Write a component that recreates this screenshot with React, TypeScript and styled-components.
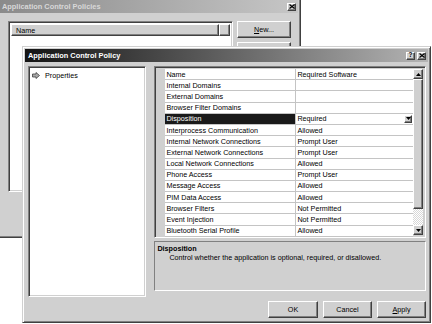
import React from 'react';
import styled, { createGlobalStyle, css } from 'styled-components';

const GlobalStyle = createGlobalStyle`
  html, body {
    margin: 0;
    padding: 0;
    background: #ffffff;
  }
  body {
    font-family: "Liberation Sans", Arial, sans-serif;
    font-size: 7.2px;
    color: #000;
  }
`;

const face = '#d0d0d0';

const raisedWindow = css`
  border: 1px solid;
  border-color: ${face} #404040 #404040 ${face};
  box-shadow: inset 1px 1px #ffffff, inset -1px -1px #808080;
`;

const raisedButton = css`
  border: 1px solid;
  border-color: #ffffff #404040 #404040 #ffffff;
  box-shadow: inset -1px -1px #808080;
`;

const sunken = css`
  border: 1px solid;
  border-color: #808080 #ffffff #ffffff #808080;
  box-shadow: inset 1px 1px #404040, inset -1px -1px ${face};
`;

const Desktop = styled.div`
  position: relative;
  width: 432px;
  height: 324px;
  overflow: hidden;
  background: #ffffff;
`;

const Window = styled.div<{ $left: number; $top: number; $width: number; $height: number }>`
  position: absolute;
  left: ${({ $left }) => $left}px;
  top: ${({ $top }) => $top}px;
  width: ${({ $width }) => $width}px;
  height: ${({ $height }) => $height}px;
  box-sizing: border-box;
  background: ${face};
  padding: 2px;
  display: flex;
  flex-direction: column;
  ${raisedWindow};
`;

const TitleBar = styled.div<{ $active?: boolean }>`
  height: 13px;
  flex: none;
  display: flex;
  align-items: center;
  gap: 2px;
  padding: 0 2px 0 3px;
  background: ${({ $active }) =>
    $active
      ? 'linear-gradient(90deg, #141414 0%, #5a5a5a 45%, #b4b4b4 100%)'
      : 'linear-gradient(90deg, #8a8a8a 0%, #c6c6c6 100%)'};
`;

const TitleText = styled.span<{ $active?: boolean }>`
  flex: 1;
  font-weight: bold;
  font-size: 7.4px;
  color: ${({ $active }) => ($active ? '#ffffff' : '#d8d8d8')};
  white-space: nowrap;
`;

const CaptionButton = styled.div`
  width: 9px;
  height: 8px;
  box-sizing: border-box;
  background: ${face};
  display: flex;
  align-items: center;
  justify-content: center;
  font-weight: bold;
  font-size: 6.5px;
  line-height: 1;
  ${raisedButton};
`;

/* background window */

const BackBody = styled.div`
  flex: 1;
  display: flex;
  gap: 4px;
  padding: 8px 0 0 9px;
`;

const ListView = styled.div`
  width: 225px;
  height: 171px;
  box-sizing: border-box;
  background: #ffffff;
  padding: 2px;
  display: flex;
  flex-direction: column;
  ${sunken};
`;

const ListHeader = styled.div`
  display: flex;
  height: 12px;
`;

const HeaderCell = styled.div<{ $width?: number }>`
  ${({ $width }) => ($width ? `width: ${$width}px;` : 'flex: 1;')}
  box-sizing: border-box;
  background: ${face};
  padding: 0 4px;
  display: flex;
  align-items: center;
  ${raisedButton};
`;

const SideButtons = styled.div`
  display: flex;
  flex-direction: column;
  gap: 4px;
`;

const PushButton = styled.div<{ $width: number }>`
  width: ${({ $width }) => $width}px;
  height: 17px;
  box-sizing: border-box;
  background: ${face};
  display: flex;
  align-items: center;
  justify-content: center;
  ${raisedButton};

  u {
    text-decoration: underline;
  }
`;

/* foreground dialog */

const DialogBody = styled.div`
  flex: 1;
  display: flex;
  flex-direction: column;
  padding: 4px 2px 0 3px;
`;

const MainRow = styled.div`
  display: flex;
  gap: 8px;
`;

const TreePanel = styled.div`
  width: 119px;
  height: 231px;
  box-sizing: border-box;
  background: #ffffff;
  padding: 4px 3px;
  ${sunken};
`;

const TreeItem = styled.div`
  display: flex;
  align-items: center;
  gap: 5px;
`;

const RightColumn = styled.div`
  width: 273px;
  display: flex;
  flex-direction: column;
  gap: 3px;
`;

const PropertyGrid = styled.div`
  height: 172px;
  box-sizing: border-box;
  padding: 2px;
  display: flex;
  background: ${face};
  ${sunken};
`;

const Rows = styled.div`
  flex: 1;
  display: flex;
  flex-direction: column;
  background: ${face};
`;

const Row = styled.div`
  height: 11.2px;
  flex: none;
  display: flex;
`;

const Gutter = styled.div`
  width: 8px;
  flex: none;
`;

const NameCell = styled.div<{ $selected?: boolean }>`
  width: 131px;
  flex: none;
  box-sizing: border-box;
  padding-left: 1px;
  display: flex;
  align-items: center;
  white-space: nowrap;
  overflow: hidden;
  border-right: 1px solid #c4c4c4;
  border-bottom: 1px solid #c4c4c4;
  background: ${({ $selected }) => ($selected ? '#1a1a1a' : '#ffffff')};
  color: ${({ $selected }) => ($selected ? '#ffffff' : '#000000')};
`;

const ValueCell = styled.div`
  flex: 1;
  box-sizing: border-box;
  padding-left: 1px;
  padding-right: 1px;
  display: flex;
  align-items: center;
  white-space: nowrap;
  background: #ffffff;
  border-bottom: 1px solid #c4c4c4;
`;

const ValueText = styled.span`
  flex: 1;
`;

const DropButton = styled.div`
  width: 8px;
  height: 8px;
  box-sizing: border-box;
  background: ${face};
  display: flex;
  align-items: center;
  justify-content: center;
  ${raisedButton};
`;

const ScrollBar = styled.div`
  width: 10px;
  flex: none;
  display: flex;
  flex-direction: column;
  background: #ececec;
`;

const ScrollArrow = styled.div`
  height: 10px;
  flex: none;
  box-sizing: border-box;
  background: ${face};
  display: flex;
  align-items: center;
  justify-content: center;
  ${raisedButton};
`;

const ScrollThumb = styled.div`
  height: 130px;
  flex: none;
  box-sizing: border-box;
  background: ${face};
  ${raisedButton};
`;

const ScrollTrack = styled.div`
  flex: 1;
  background: repeating-conic-gradient(#ffffff 0 25%, #d8d8d8 0 50%) 0 0 / 2px 2px;
`;

const DescPanel = styled.div`
  height: 50px;
  box-sizing: border-box;
  padding: 3px 2px;
  border: 1px solid;
  border-color: #808080 #ffffff #ffffff #808080;
`;

const DescTitle = styled.div`
  font-weight: bold;
  line-height: 8px;
`;

const DescText = styled.div`
  margin-left: 12px;
  line-height: 9px;
`;

const ButtonRow = styled.div`
  margin-top: 4px;
  display: flex;
  justify-content: flex-end;
  gap: 5px;
`;

const rows: [string, string][] = [
  ['Name', 'Required Software'],
  ['Internal Domains', ''],
  ['External Domains', ''],
  ['Browser Filter Domains', ''],
  ['Disposition', 'Required'],
  ['Interprocess Communication', 'Allowed'],
  ['Internal Network Connections', 'Prompt User'],
  ['External Network Connections', 'Prompt User'],
  ['Local Network Connections', 'Allowed'],
  ['Phone Access', 'Prompt User'],
  ['Message Access', 'Allowed'],
  ['PIM Data Access', 'Allowed'],
  ['Browser Filters', 'Not Permitted'],
  ['Event Injection', 'Not Permitted'],
  ['Bluetooth Serial Profile', 'Allowed'],
];

const CloseGlyph = () => (
  <svg width="6" height="5" viewBox="0 0 6 5">
    <path d="M0.5 0.5 L5.5 4.5 M5.5 0.5 L0.5 4.5" stroke="#000" strokeWidth="1.2" />
  </svg>
);

const Triangle: React.FC<{ up?: boolean }> = ({ up }) => (
  <svg width="5" height="3" viewBox="0 0 5 3">
    <polygon points={up ? '2.5,0 5,3 0,3' : '0,0 5,0 2.5,3'} fill="#000" />
  </svg>
);

const PropertiesIcon = () => (
  <svg width="8" height="7" viewBox="0 0 8 7">
    <polygon
      points="0.5,2 4,2 4,0.5 7.5,3.5 4,6.5 4,5 0.5,5"
      fill="#a8a8a8"
      stroke="#404040"
      strokeWidth="0.8"
    />
  </svg>
);

const App: React.FC = () => {
  return (
    <>
      <GlobalStyle />
      <Desktop>
        <Window $left={-4} $top={-3} $width={305} $height={241}>
          <TitleBar>
            <TitleText>Application Control Policies</TitleText>
            <CaptionButton>
              <CloseGlyph />
            </CaptionButton>
          </TitleBar>
          <BackBody>
            <ListView>
              <ListHeader>
                <HeaderCell $width={208}>Name</HeaderCell>
                <HeaderCell />
              </ListHeader>
            </ListView>
            <SideButtons>
              <PushButton $width={54}>
                <span>
                  <u>N</u>ew...
                </span>
              </PushButton>
              <PushButton $width={54} />
            </SideButtons>
          </BackBody>
        </Window>

        <Window $left={22} $top={46} $width={409} $height={277}>
          <TitleBar $active>
            <TitleText $active>Application Control Policy</TitleText>
            <CaptionButton>?</CaptionButton>
            <CaptionButton>
              <CloseGlyph />
            </CaptionButton>
          </TitleBar>
          <DialogBody>
            <MainRow>
              <TreePanel>
                <TreeItem>
                  <PropertiesIcon />
                  <span>Properties</span>
                </TreeItem>
              </TreePanel>
              <RightColumn>
                <PropertyGrid>
                  <Rows>
                    {rows.map(([name, value]) => {
                      const selected = name === 'Disposition';
                      return (
                        <Row key={name}>
                          <Gutter />
                          <NameCell $selected={selected}>{name}</NameCell>
                          <ValueCell>
                            <ValueText>{value}</ValueText>
                            {selected && (
                              <DropButton>
                                <Triangle />
                              </DropButton>
                            )}
                          </ValueCell>
                        </Row>
                      );
                    })}
                  </Rows>
                  <ScrollBar>
                    <ScrollArrow>
                      <Triangle up />
                    </ScrollArrow>
                    <ScrollThumb />
                    <ScrollTrack />
                    <ScrollArrow>
                      <Triangle />
                    </ScrollArrow>
                  </ScrollBar>
                </PropertyGrid>
                <DescPanel>
                  <DescTitle>Disposition</DescTitle>
                  <DescText>Control whether the application is optional, required, or disallowed.</DescText>
                </DescPanel>
              </RightColumn>
            </MainRow>
            <ButtonRow>
              <PushButton $width={50}>OK</PushButton>
              <PushButton $width={49}>Cancel</PushButton>
              <PushButton $width={49}>
                <span>
                  <u>A</u>pply
                </span>
              </PushButton>
            </ButtonRow>
          </DialogBody>
        </Window>
      </Desktop>
    </>
  );
};

export default App;
